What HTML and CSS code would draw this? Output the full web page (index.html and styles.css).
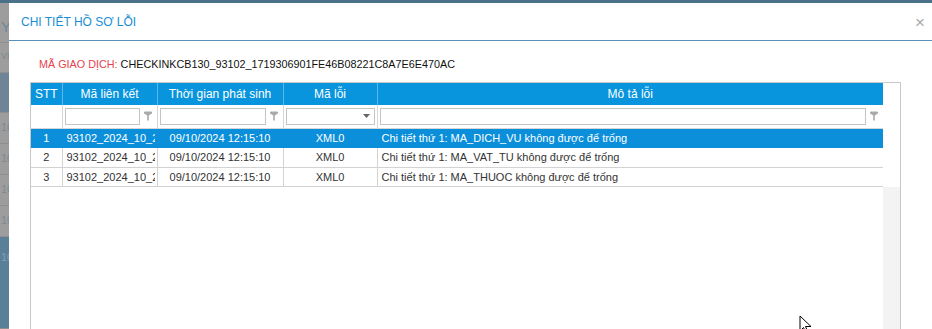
FILE: index.html
```html
<!DOCTYPE html>
<html lang="vi">
<head>
    <meta charset="UTF-8">
    <title>Chi tiết hồ sơ lỗi</title>
    <link rel="stylesheet" href="styles.css">
</head>
<body>
    <div class="topbar"></div>

    <div class="screen">
        <!-- trang phía sau lớp phủ -->
        <aside class="backdrop">
            <div class="bd-row bd-letter">Y</div>
            <div class="bd-row bd-small">VI</div>
            <div class="bd-row bd-band"></div>
            <div class="bd-row bd-num">10</div>
            <div class="bd-row bd-num">10</div>
            <div class="bd-row bd-num">10</div>
            <div class="bd-row bd-num">10</div>
            <div class="bd-row bd-blue">10</div>
        </aside>

        <section class="modal">
            <header class="modal-head">
                <h1 class="modal-title">CHI TIẾT HỒ SƠ LỖI</h1>
                <span class="modal-close">×</span>
            </header>

            <div class="modal-body">
                <p class="trans">
                    <span class="trans-label">MÃ GIAO DỊCH:</span>
                    <span class="trans-value">CHECKINKCB130_93102_1719306901FE46B08221C8A7E6E470AC</span>
                </p>

                <div class="grid">
                    <div class="grid-main">
                        <table class="grid-table">
                            <colgroup>
                                <col class="col-stt">
                                <col class="col-link">
                                <col class="col-time">
                                <col class="col-code">
                                <col class="col-desc">
                            </colgroup>
                            <thead>
                                <tr class="head-row">
                                    <th>STT</th>
                                    <th>Mã liên kết</th>
                                    <th>Thời gian phát sinh</th>
                                    <th>Mã lỗi</th>
                                    <th>Mô tả lỗi</th>
                                </tr>
                                <tr class="filter-row">
                                    <td></td>
                                    <td>
                                        <div class="filter">
                                            <span class="filter-box"></span>
                                            <svg class="funnel" width="8" height="10" viewBox="0 0 8 10"><path d="M1 0.5h6a1 1 0 0 1 0 2.5L4.8 4.5V9.5H3.2V4.5L1 3a1 1 0 0 1 0-2.5z" fill="#aaa"/></svg>
                                        </div>
                                    </td>
                                    <td>
                                        <div class="filter">
                                            <span class="filter-box"></span>
                                            <svg class="funnel" width="8" height="10" viewBox="0 0 8 10"><path d="M1 0.5h6a1 1 0 0 1 0 2.5L4.8 4.5V9.5H3.2V4.5L1 3a1 1 0 0 1 0-2.5z" fill="#aaa"/></svg>
                                        </div>
                                    </td>
                                    <td>
                                        <div class="filter">
                                            <span class="filter-box select-box">
                                                <svg width="7" height="4" viewBox="0 0 7 4"><path d="M0 0h7L3.5 4z" fill="#666"/></svg>
                                            </span>
                                        </div>
                                    </td>
                                    <td>
                                        <div class="filter">
                                            <span class="filter-box"></span>
                                            <svg class="funnel" width="8" height="10" viewBox="0 0 8 10"><path d="M1 0.5h6a1 1 0 0 1 0 2.5L4.8 4.5V9.5H3.2V4.5L1 3a1 1 0 0 1 0-2.5z" fill="#aaa"/></svg>
                                        </div>
                                    </td>
                                </tr>
                            </thead>
                            <tbody>
                                <tr class="data-row selected">
                                    <td class="c-center">1</td>
                                    <td><div class="clip">93102_2024_10_2</div></td>
                                    <td class="c-center">09/10/2024 12:15:10</td>
                                    <td class="c-center">XML0</td>
                                    <td>Chi tiết thứ 1: MA_DICH_VU không được để trống</td>
                                </tr>
                                <tr class="data-row">
                                    <td class="c-center">2</td>
                                    <td><div class="clip">93102_2024_10_2</div></td>
                                    <td class="c-center">09/10/2024 12:15:10</td>
                                    <td class="c-center">XML0</td>
                                    <td>Chi tiết thứ 1: MA_VAT_TU không được để trống</td>
                                </tr>
                                <tr class="data-row">
                                    <td class="c-center">3</td>
                                    <td><div class="clip">93102_2024_10_2</div></td>
                                    <td class="c-center">09/10/2024 12:15:10</td>
                                    <td class="c-center">XML0</td>
                                    <td>Chi tiết thứ 1: MA_THUOC không được để trống</td>
                                </tr>
                            </tbody>
                        </table>
                    </div>
                    <div class="grid-scroll">
                        <div class="scroll-top"></div>
                        <div class="scroll-track"></div>
                    </div>
                </div>
            </div>
        </section>
    </div>

    <!-- con trỏ chuột -->
    <svg class="cursor" width="14" height="20" viewBox="0 0 14 20">
        <path d="M1 1v15l3.5-3.5 2.5 5.5 2-1-2.5-5.5H12z" fill="#fff" stroke="#000" stroke-width="1"/>
    </svg>
</body>
</html>
```

FILE: styles.css
```css
* {
    margin: 0;
    padding: 0;
    box-sizing: border-box;
}

body {
    font-family: 'Liberation Sans', Arial, sans-serif;
    color: #333;
    height: 329px;
    overflow: hidden;
    background-color: #9b9b9b;
    position: relative;
}

.topbar {
    height: 3px;
    background-color: #4b7089;
}

.screen {
    display: flex;
    height: 326px;
}

/* trang phía sau */
.backdrop {
    width: 9px;
    flex-shrink: 0;
    display: flex;
    flex-direction: column;
    background-color: #9d9d9d;
    overflow: hidden;
    color: #7c8a94;
    font-size: 11px;
}

.bd-row {
    border-bottom: 1px solid #8f8f8f;
    padding-left: 1px;
    white-space: nowrap;
}

.bd-letter {
    height: 40px;
    padding-top: 15px;
    font-size: 15px;
    color: #6f8797;
}

.bd-small {
    height: 30px;
    padding-top: 8px;
    font-size: 9px;
}

.bd-band {
    height: 40px;
    background-color: #6f8496;
}

.bd-num {
    height: 31px;
    padding-top: 8px;
}

.bd-blue {
    flex: 1;
    padding-top: 14px;
    background-color: #5a8099;
    color: #7f9fb5;
}

/* hộp thoại */
.modal {
    flex: 1;
    background-color: #fff;
    display: flex;
    flex-direction: column;
}

.modal-head {
    height: 38px;
    flex-shrink: 0;
    display: flex;
    align-items: center;
    justify-content: space-between;
    padding: 1px 7px 0 12px;
    border-bottom: 1px solid #5a8fba;
}

.modal-title {
    font-size: 12px;
    font-weight: normal;
    color: #1b8ed6;
}

.modal-close {
    font-size: 17px;
    color: #aaa;
    line-height: 1;
}

.modal-body {
    flex: 1;
    padding: 16px 0 0 21px;
    display: flex;
    flex-direction: column;
}

.trans {
    font-size: 10.8px;
    line-height: 14px;
    padding-left: 9px;
    margin-bottom: 11px;
    color: #111;
}

.trans-label {
    color: #e8424c;
}

/* lưới dữ liệu */
.grid {
    flex: 1;
    width: 871px;
    display: flex;
    border: 1px solid #c8c8c8;
    border-bottom: none;
}

.grid-main {
    width: 852px;
    flex-shrink: 0;
}

.grid-table {
    width: 852px;
    table-layout: fixed;
    border-collapse: collapse;
    font-size: 11px;
}

.col-stt { width: 31px; }
.col-link { width: 95px; }
.col-time { width: 126px; }
.col-code { width: 94px; }
.col-desc { width: 506px; }

.head-row th {
    height: 22px;
    background-color: #0895de;
    color: #fff;
    font-size: 12px;
    font-weight: normal;
    border-left: 1px solid #5eb6e9;
    white-space: nowrap;
}

.head-row th:first-child {
    border-left: none;
}

.filter-row td {
    height: 23px;
    border: 1px solid #d6d6d6;
    border-top: none;
    padding: 0 2px;
}

.filter-row td:first-child {
    border-left: none;
}

.filter {
    display: flex;
    align-items: center;
    gap: 4px;
}

.filter-box {
    flex: 1;
    height: 17px;
    border: 1px solid #c4c4c4;
    background-color: #fff;
}

.funnel {
    flex-shrink: 0;
    margin-right: 3px;
}

.select-box {
    display: flex;
    align-items: center;
    justify-content: flex-end;
    padding-right: 4px;
}

.data-row td {
    height: 19.6px;
    border: 1px solid #d3d3d3;
    padding: 0 4px;
    white-space: nowrap;
    overflow: hidden;
    color: #333;
}

.data-row td:first-child {
    border-left: none;
}

.data-row .c-center {
    text-align: center;
}

.clip {
    width: 88px;
    overflow: hidden;
    white-space: nowrap;
}

.data-row.selected td {
    background-color: #0b8fdb;
    color: #fff;
    border-color: #0b8fdb;
    border-left-color: #4aaee6;
}

.data-row.selected td:first-child {
    border-left-color: #0b8fdb;
}

.grid-scroll {
    flex: 1;
    display: flex;
    flex-direction: column;
}

.scroll-top {
    height: 104px;
    background-color: #fff;
}

.scroll-track {
    flex: 1;
    background-color: #f3f3f3;
}

.cursor {
    position: absolute;
    left: 799px;
    top: 315px;
}
```
